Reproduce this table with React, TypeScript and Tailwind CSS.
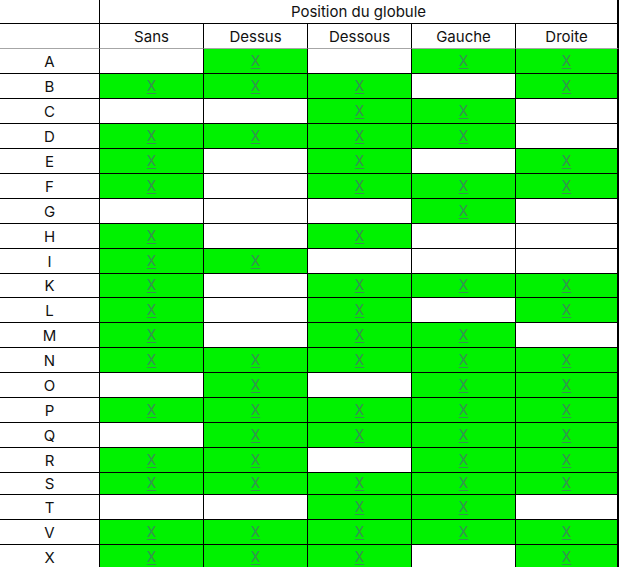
const cols = ["Sans", "Dessus", "Dessous", "Gauche", "Droite"];

// label, marks (1 = X on green), row height class
const rows: [string, string, string][] = [
  ["A", "01011", "h-[25px]"],
  ["B", "11101", "h-[25px]"],
  ["C", "00110", "h-[25px]"],
  ["D", "11110", "h-[25px]"],
  ["E", "10101", "h-[25px]"],
  ["F", "10111", "h-[25px]"],
  ["G", "00010", "h-[25px]"],
  ["H", "10100", "h-[25px]"],
  ["I", "11000", "h-[25px]"],
  ["K", "10111", "h-[24px]"],
  ["L", "10101", "h-[25px]"],
  ["M", "10110", "h-[25px]"],
  ["N", "11111", "h-[25px]"],
  ["O", "01011", "h-[25px]"],
  ["P", "11111", "h-[25px]"],
  ["Q", "01111", "h-[25px]"],
  ["R", "11011", "h-[25px]"],
  ["S", "11111", "h-[22px]"],
  ["T", "00110", "h-[25px]"],
  ["V", "11111", "h-[25px]"],
  ["X", "11101", "h-[25px]"],
];

function Mark({ on, last, h }: { on: boolean; last: boolean; h: string }) {
  return (
    <div
      className={`${h} flex items-center justify-center border-b border-black ${
        last ? "border-r-2" : "border-r"
      } ${on ? "bg-[#00f200]" : "bg-white"}`}
    >
      {on && (
        <span className="text-[15px] font-normal leading-none text-[#35944f] underline underline-offset-[2px] decoration-1 [font-family:Roboto,sans-serif]">
          X
        </span>
      )}
    </div>
  );
}

export default function App() {
  return (
    <div className="w-[620px] h-[567px] overflow-hidden bg-white text-[15px] text-[#111] [font-family:Inter,'Noto_Sans',sans-serif]">
      <div className="grid grid-cols-[100px_104px_104px_104px_104px_103px]">
        {/* title row */}
        <div className="h-[24px] border-r border-b border-black" />
        <div className="col-span-5 h-[24px] flex items-center justify-center border-r-2 border-b border-black leading-none">
          Position du globule
        </div>

        {/* column names */}
        <div className="h-[25px] border-r border-b border-black border-b-[#a6a6a6]" />
        {cols.map((c, i) => (
          <div
            key={c}
            className={`h-[25px] flex items-center justify-center border-black border-b border-b-[#a6a6a6] leading-none ${
              i === 4 ? "border-r-2" : "border-r"
            }`}
          >
            {c}
          </div>
        ))}

        {/* data */}
        {rows.map(([label, marks, h]) => (
          <div key={label} className="contents">
            <div className={`${h} flex items-center justify-center border-r border-b border-black leading-none`}>
              {label}
            </div>
            {marks.split("").map((m, i) => (
              <Mark key={i} on={m === "1"} last={i === 4} h={h} />
            ))}
          </div>
        ))}
      </div>
    </div>
  );
}
